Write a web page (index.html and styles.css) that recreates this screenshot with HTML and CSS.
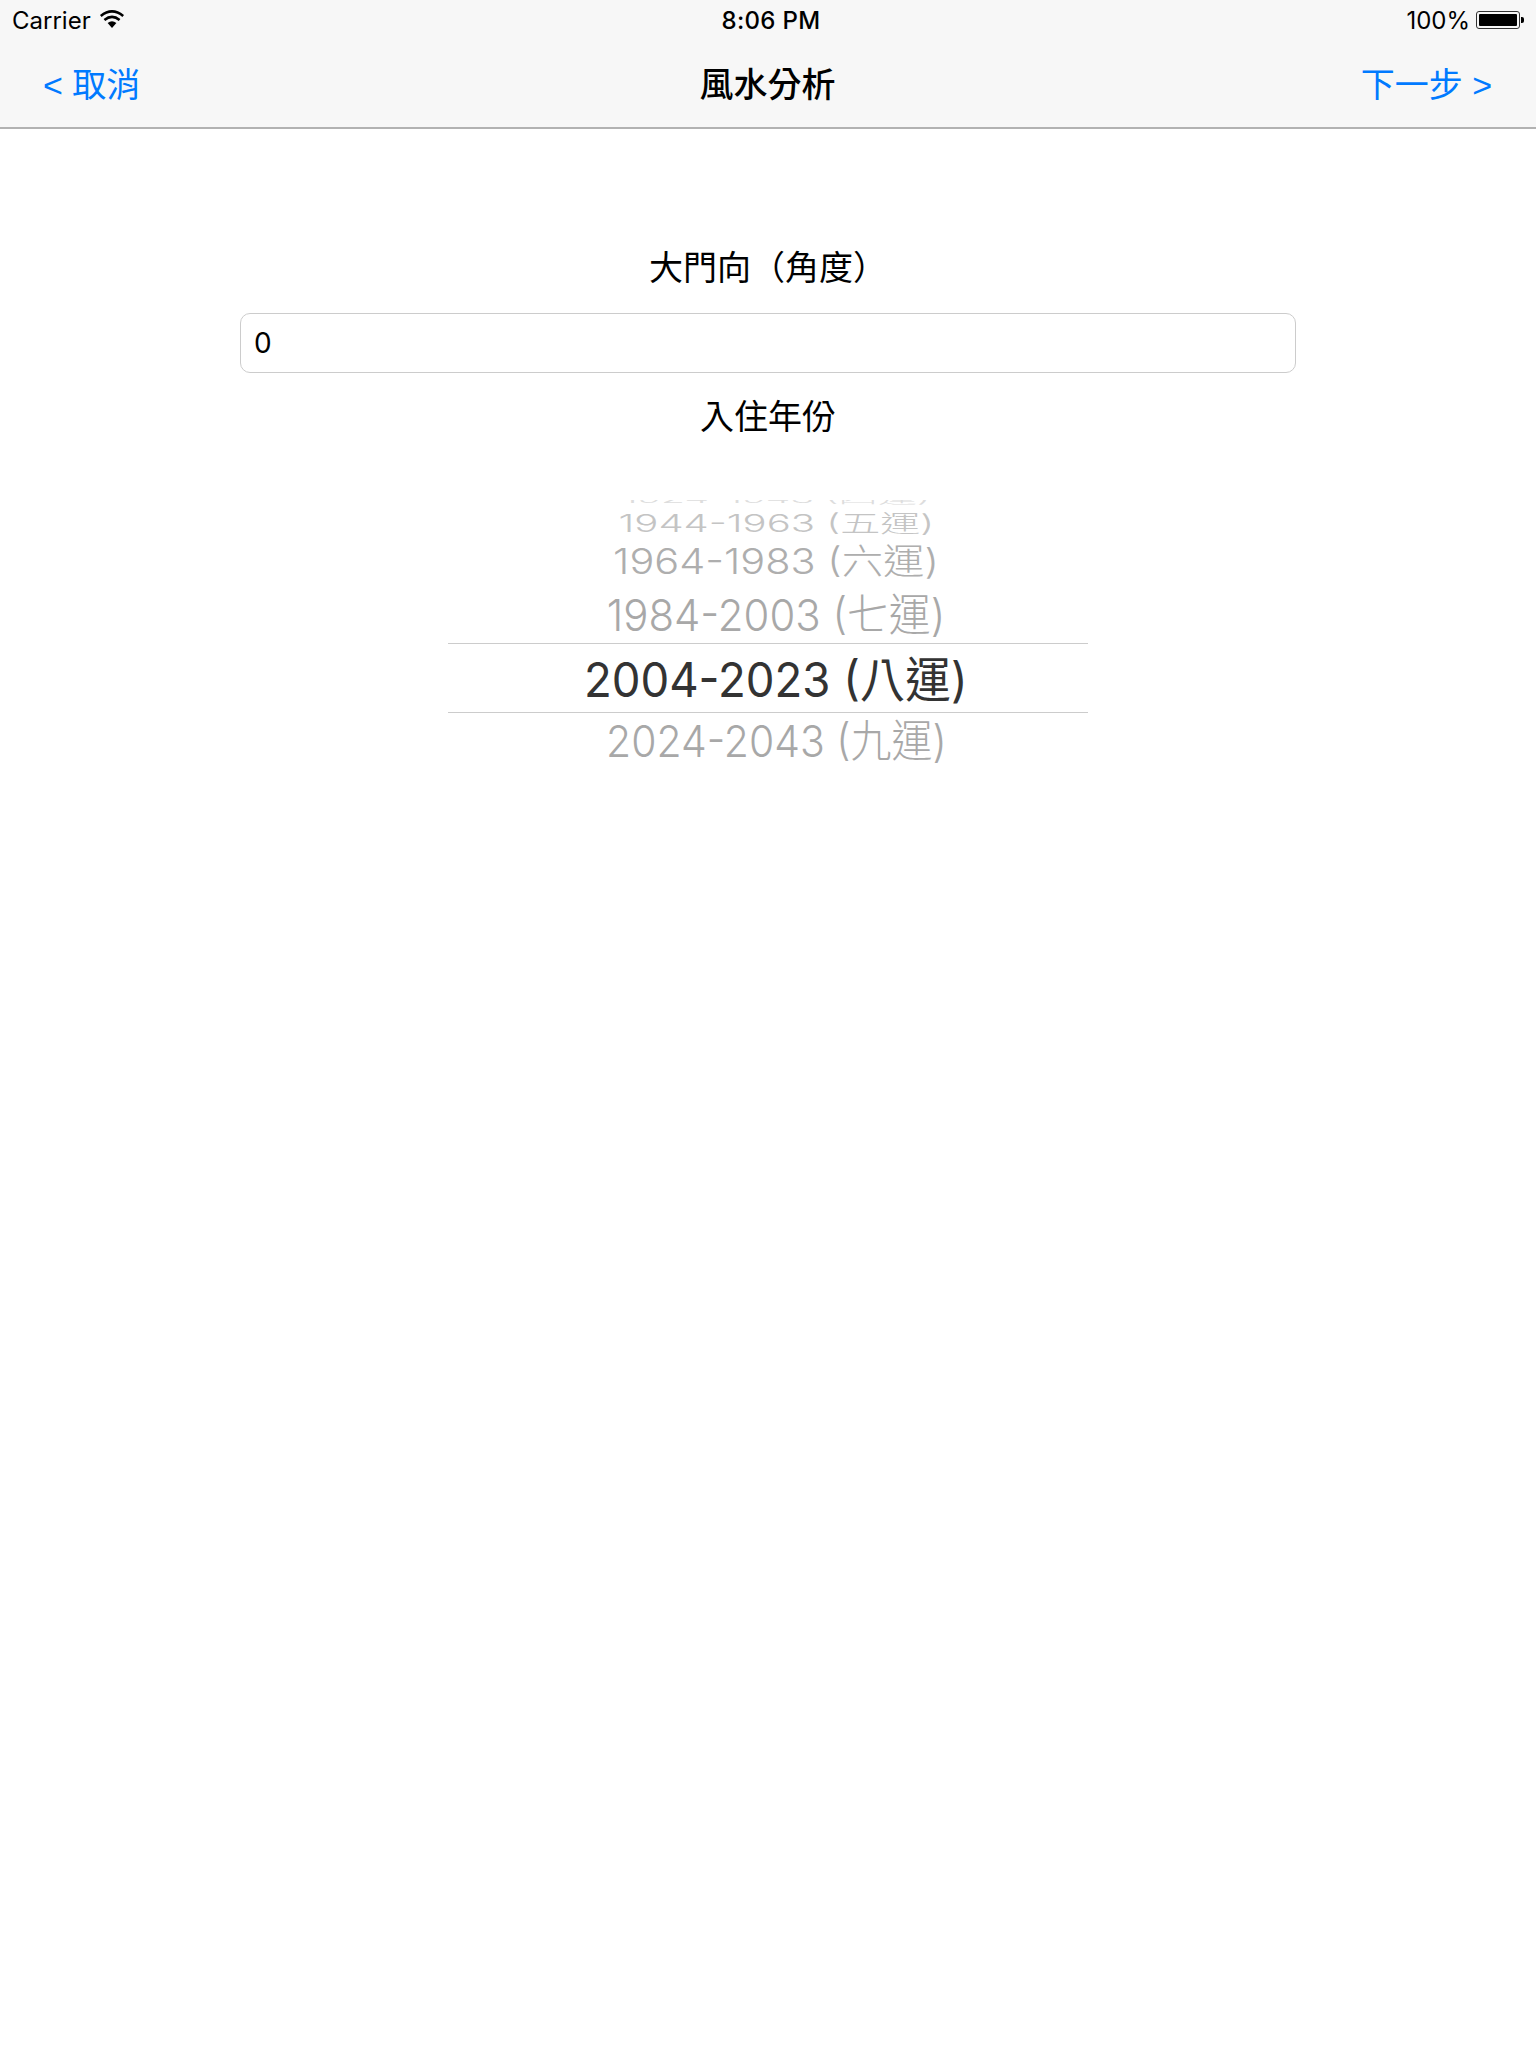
FILE: index.html
```html
<!DOCTYPE html>
<html lang="zh-Hant">
<head>
    <meta charset="UTF-8">
    <meta name="viewport" content="width=device-width, initial-scale=1.0">
    <title>風水分析</title>
    <link rel="stylesheet" href="styles.css">
</head>
<body>
    <header class="topbar">
        <div class="status">
            <div class="status-left">
                <span>Carrier</span>
                <svg class="wifi" viewBox="0 0 26 18" width="26" height="18">
                    <path d="M13 18 L8.6 13 Q13 9.6 17.4 13 Z" fill="#000"/>
                    <path d="M5.4 9.9 Q13 3.9 20.6 9.9" fill="none" stroke="#000" stroke-width="2.6"/>
                    <path d="M1.8 5.9 Q13 -3 24.2 5.9" fill="none" stroke="#000" stroke-width="2.6"/>
                </svg>
            </div>
            <span class="status-time">8:06 PM</span>
            <div class="status-right">
                <span>100%</span>
                <div class="battery"><div class="battery-fill"></div></div>
                <div class="battery-nub"></div>
            </div>
        </div>
        <nav class="navbar">
            <a class="nav-link" href="#">&lt; 取消</a>
            <h1 class="nav-title">風水分析</h1>
            <a class="nav-link nav-next" href="#">下一步 &gt;</a>
        </nav>
    </header>

    <main class="form">
        <label class="form-label" for="angle">大門向（角度）</label>
        <input class="form-input" id="angle" type="text" value="0">
        <p class="form-label year-label">入住年份</p>

        <div class="picker">
            <div class="picker-row row-far-3"><span>1924-1943 (四運)</span></div>
            <div class="picker-row row-far-2"><span>1944-1963 (五運)</span></div>
            <div class="picker-row row-far-1"><span>1964-1983 (六運)</span></div>
            <div class="picker-row row-near"><span>1984-2003 (七運)</span></div>
            <div class="picker-row row-selected"><span>2004-2023 (八運)</span></div>
            <div class="picker-row row-below"><span>2024-2043 (九運)</span></div>
        </div>
    </main>
</body>
</html>
```

FILE: styles.css
```css
body {
    font-family: Inter, "Liberation Sans", "Noto Sans CJK TC", sans-serif;
    margin: 0;
    padding: 0;
    background-color: #fff;
    color: #000;
}

.topbar {
    background-color: #f7f7f7;
    border-bottom: 2px solid #b2b2b2;
    height: 127px;
}

.status {
    display: grid;
    grid-template-columns: 1fr auto 1fr;
    align-items: center;
    height: 40px;
    padding: 0 12px 0 12px;
    font-size: 24px;
}

.status-left {
    display: flex;
    align-items: center;
    gap: 8px;
}

.wifi {
    margin-top: -2px;
}

.status-time {
    font-weight: 500;
    letter-spacing: 0.3px;
    margin-left: 6px;
}

.status-right {
    display: flex;
    align-items: center;
    justify-content: flex-end;
}

.battery {
    width: 44px;
    height: 18px;
    margin-left: 6px;
    padding: 2px;
    box-sizing: border-box;
    border: 1px solid #333;
    border-radius: 3px;
}

.battery-fill {
    height: 100%;
    background-color: #000;
    border-radius: 1px;
}

.battery-nub {
    width: 3px;
    height: 6px;
    margin-left: 1px;
    background-color: #000;
    border-radius: 0 2px 2px 0;
}

.navbar {
    display: grid;
    grid-template-columns: 1fr auto 1fr;
    align-items: center;
    height: 85px;
    padding: 0 44px 2px 43px;
    font-family: "Liberation Sans", "Noto Sans CJK TC", sans-serif;
}

.nav-link {
    color: #007aff;
    font-size: 34px;
    text-decoration: none;
}

.nav-next {
    justify-self: end;
}

.nav-title {
    margin: 0;
    font-size: 34px;
    font-weight: 500;
}

.form {
    display: flex;
    flex-direction: column;
    align-items: center;
    padding-top: 115px;
}

.form-label {
    font-family: "Liberation Sans", "Noto Sans CJK TC", sans-serif;
    font-size: 34px;
    line-height: 48px;
    margin: 0;
}

.form-input {
    width: 1056px;
    height: 60px;
    margin-top: 21px;
    padding: 0 13px;
    box-sizing: border-box;
    border: 1px solid #ccc;
    border-radius: 10px;
    font-family: inherit;
    font-size: 28px;
    color: #000;
    outline: none;
}

.year-label {
    margin-top: 20px;
}

.picker {
    width: 640px;
    height: 264px;
    margin-top: 59px;
    overflow: hidden;
    font-size: 46px;
    color: #333;
}

.picker-row {
    display: flex;
    justify-content: center;
    align-items: center;
    padding-left: 16px;
    white-space: nowrap;
    font-weight: 300;
}

.picker-row span {
    display: block;
}

.row-far-3 {
    height: 9px;
    color: #ddd;
}

.row-far-3 span {
    transform: translateY(-8px) scale(0.85, 0.28);
}

.row-far-2 {
    height: 31px;
    color: #c4c4c4;
}

.row-far-2 span {
    transform: translateY(-3px) scale(0.87, 0.52);
}

.row-far-1 {
    height: 47px;
    color: #aeaeae;
}

.row-far-1 span {
    transform: translateY(-5px) scale(0.9, 0.76);
}

.row-near {
    height: 56px;
    color: #a8a8a8;
}

.row-near span {
    transform: translateY(-3px) scale(0.91, 0.96);
}

.row-selected {
    height: 70px;
    border-top: 1px solid #ccc;
    border-bottom: 1px solid #ccc;
    box-sizing: border-box;
    font-weight: 400;
}

.row-selected span {
    transform: translateY(-2px) scale(0.99, 1.04);
}

.row-below {
    height: 51px;
    color: #a8a8a8;
}

.row-below span {
    transform: translateY(-1px) scale(0.89, 0.96);
}
```
